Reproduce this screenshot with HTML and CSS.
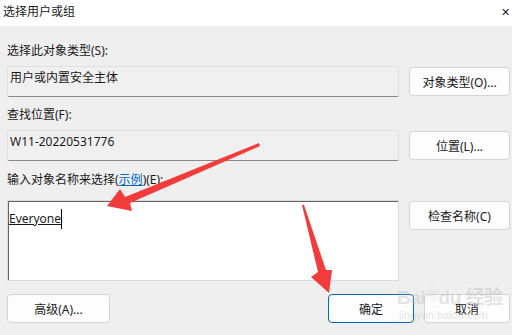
FILE: index.html
```html
<!DOCTYPE html>
<html lang="zh-CN">
<head>
<meta charset="UTF-8">
<title>选择用户或组</title>
<link rel="stylesheet" href="styles.css">
</head>
<body>

<div class="titlebar">
    <span class="title">选择用户或组</span>
    <span class="close">✕</span>
</div>

<div class="dialog">
    <div class="label first">选择此对象类型(S):</div>
    <div class="row">
        <div class="readonly">用户或内置安全主体</div>
        <button class="btn side">对象类型(O)...</button>
    </div>

    <div class="label second">查找位置(F):</div>
    <div class="row">
        <div class="readonly">W11-20220531776</div>
        <button class="btn side">位置(L)...</button>
    </div>

    <div class="label third">输入对象名称来选择(<a class="link">示例</a>)(E):</div>
    <div class="row">
        <div class="names"><u>Everyone</u><span class="caret"></span></div>
        <button class="btn side">检查名称(C)</button>
    </div>

    <div class="footer">
        <button class="btn advanced">高级(A)...</button>
        <div class="actions">
            <button class="btn ok">确定</button>
            <button class="btn cancel">取消</button>
        </div>
    </div>
</div>

<div class="watermark">
    <span class="wm-logo">Bai<span class="paw">❀</span>du 经验</span>
    <span class="wm-url">jingyan.baidu.com</span>
</div>

<svg class="arrows" width="512" height="335" viewBox="0 0 512 335">
    <polygon points="259,143 260,146 130,203 132,211 107,206 120,189 125,197" fill="#f23b3b"/>
    <polygon points="302,205 304,205 326,270 332,270 329,293 311,277 318,272" fill="#f23b3b"/>
</svg>

</body>
</html>
```

FILE: styles.css
```css
body {
    margin: 0;
    width: 512px;
    height: 335px;
    overflow: hidden;
    background: #efefef;
    font-family: "Segoe UI", "Noto Sans", "Noto Sans CJK SC", sans-serif;
    font-size: 12px;
    color: #1a1a1a;
    position: relative;
}
.titlebar {
    height: 26px;
    background: #ffffff;
    display: flex;
    justify-content: space-between;
    align-items: center;
    padding: 0 2px 0 3px;
}
.title {
    font-size: 12px;
    line-height: 16px;
    margin-top: -2px;
}
.close {
    font-size: 11px;
    margin-top: -4px;
    color: #222;
}
.dialog {
    padding: 0 2px 0 7px;
}
.label {
    line-height: 16px;
    height: 16px;
}
.label.first {
    padding-top: 17px;
    margin-bottom: 7px;
}
.label.second {
    margin-top: 10px;
    margin-bottom: 7px;
}
.label.third {
    margin-top: 11px;
    margin-bottom: 12px;
}
.link {
    color: #0066cc;
    text-decoration: underline;
}
.row {
    display: flex;
    align-items: flex-start;
    gap: 10px;
}
.readonly {
    width: 392px;
    height: 31px;
    box-sizing: border-box;
    background: #f0f0f0;
    border: 1px solid #e0e0e0;
    border-bottom: 1px solid #8a8a8a;
    border-radius: 2px;
    padding: 3px 2px;
    line-height: 16px;
}
.names {
    width: 392px;
    height: 81px;
    box-sizing: border-box;
    background: #ffffff;
    border: 1px solid #dadada;
    box-shadow: inset 1px 1px 0 #646464;
    padding: 8px 1px;
    line-height: 16px;
}
.names u {
    text-decoration-thickness: 1px;
}
.caret {
    display: inline-block;
    width: 1px;
    height: 20px;
    background: #000;
    vertical-align: -6px;
}
.btn {
    font-family: inherit;
    font-size: 12px;
    color: #1a1a1a;
    background: #fdfdfd;
    border: 1px solid #d4d4d4;
    border-radius: 4px;
    height: 29px;
    padding: 0;
    box-sizing: border-box;
}
.side {
    width: 101px;
    margin-top: 1px;
}
.footer {
    display: flex;
    justify-content: space-between;
    margin-top: 13px;
}
.advanced {
    width: 103px;
}
.actions {
    display: flex;
    gap: 10px;
}
.ok {
    width: 86px;
    border: 1px solid #0067c0;
}
.cancel {
    width: 86px;
}
.watermark {
    position: absolute;
    left: 397px;
    top: 283px;
    display: flex;
    flex-direction: column;
    align-items: flex-start;
    white-space: nowrap;
    color: rgba(185, 185, 185, 0.4);
    pointer-events: none;
}
.wm-logo {
    font-family: "Liberation Sans", "Noto Sans CJK SC", sans-serif;
    font-size: 19px;
    font-weight: bold;
    line-height: 22px;
    letter-spacing: -0.5px;
}
.paw {
    font-size: 14px;
    vertical-align: 5px;
}
.wm-url {
    font-family: "Liberation Sans", sans-serif;
    font-size: 11px;
    line-height: 12px;
    margin-left: 2px;
}
.arrows {
    position: absolute;
    left: 0;
    top: 0;
}
```
